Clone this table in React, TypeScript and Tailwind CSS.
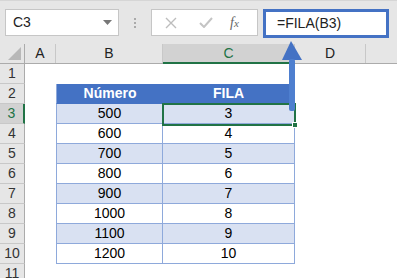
import React from "react";

const rows = [
  { n: 1 },
  { n: 2, b: "Número", c: "FILA", header: true },
  { n: 3, b: "500", c: "3", band: true },
  { n: 4, b: "600", c: "4" },
  { n: 5, b: "700", c: "5", band: true },
  { n: 6, b: "800", c: "6" },
  { n: 7, b: "900", c: "7", band: true },
  { n: 8, b: "1000", c: "8" },
  { n: 9, b: "1100", c: "9", band: true },
  { n: 10, b: "1200", c: "10" },
  { n: 11 },
];

const font = { fontFamily: '"Liberation Sans", Arial, sans-serif' };

export default function App() {
  return (
    <div className="relative w-[397px] h-[278px] overflow-hidden bg-white text-[#222]" style={font}>
      {/* top bar */}
      <div className="h-[44px] bg-[#e6e6e6] border-t border-[#d6d6d6] flex items-start pt-[8px]">
        <div className="ml-[5px] w-[114px] h-[27px] bg-white border border-[#c6c6c6] flex items-center justify-between pl-[7px] pr-[6px]">
          <span className="text-[14px] text-[#222]">C3</span>
          <svg width="9" height="5" viewBox="0 0 9 5"><path d="M0 0h9L4.5 5z" fill="#777" /></svg>
        </div>
        <div className="w-[32px] h-[27px] flex flex-col items-center justify-center gap-[2px]">
          <span className="w-[2px] h-[2px] bg-[#aaa]" />
          <span className="w-[2px] h-[2px] bg-[#aaa]" />
          <span className="w-[2px] h-[2px] bg-[#aaa]" />
        </div>
        <div className="w-[107px] h-[27px] bg-white border border-[#c6c6c6] flex items-center">
          <svg className="ml-[13px]" width="12" height="12" viewBox="0 0 12 12"><path d="M1 1l10 10M11 1L1 11" stroke="#bdbdbd" strokeWidth="1.4" /></svg>
          <svg className="ml-[22px]" width="14" height="11" viewBox="0 0 14 11"><path d="M1 6l4 4 8-9" stroke="#c4c4c4" strokeWidth="2" fill="none" /></svg>
          <span className="ml-[17px] text-[14px] italic text-[#666]" style={{ fontFamily: '"Liberation Serif", serif' }}>f<span className="text-[11px]">x</span></span>
        </div>
        <div className="ml-[5px] w-[126px] h-[29px] bg-white border-[3px] border-[#4472c4] flex items-center pl-[11px]">
          <span className="text-[14px] text-[#222]">=FILA(B3)</span>
        </div>
      </div>

      {/* column headers */}
      <div className="flex h-[20px] bg-[#e6e6e6] border-b border-[#ababab] text-[14px] text-[#222]">
        <div className="w-[25px] h-full border-r border-[#ababab] relative">
          <svg className="absolute right-[3px] bottom-[3px]" width="13" height="13" viewBox="0 0 13 13"><path d="M13 0v13H0z" fill="#b8b8b8" /></svg>
        </div>
        <div className="w-[31px] h-full border-r border-[#c8c8c8] flex items-center justify-center">A</div>
        <div className="w-[107px] h-full border-r border-[#c8c8c8] flex items-center justify-center">B</div>
        <div className="w-[132px] h-[20px] bg-[#d2d2d2] border-b-2 border-[#217346] border-r border-r-[#c8c8c8] flex items-center justify-center text-[#217346] -mb-px">C</div>
        <div className="w-[71px] h-full border-r border-[#c8c8c8] flex items-center justify-center">D</div>
        <div className="flex-1 h-full" />
      </div>

      {/* rows */}
      {rows.map((r) => {
        const selRow = r.n === 3;
        const inTable = r.b !== undefined;
        const fill = r.header ? "bg-[#4472c4]" : r.band ? "bg-[#d9e1f2]" : "bg-white";
        return (
          <div key={r.n} className="flex h-[20px] text-[14px]">
            <div
              className={
                "w-[25px] h-full border-b flex items-center justify-center " +
                (selRow
                  ? "bg-[#d2d2d2] border-b-[#c8c8c8] border-r-2 border-r-[#217346] text-[#217346]"
                  : "bg-[#e6e6e6] border-b-[#c8c8c8] border-r border-r-[#ababab] text-[#333]")
              }
            >
              {r.n}
            </div>
            <div className="w-[31px] h-full" />
            {inTable ? (
              <>
                <div
                  className={
                    "w-[107px] h-full flex items-center justify-center border-l border-[#8ea9db] " +
                    (r.header ? "" : "border-r ") +
                    "border-b " +
                    fill +
                    (r.header ? " text-white font-bold border-[#4472c4] border-l-[#8ea9db]" : " text-black")
                  }
                >
                  {r.b}
                </div>
                <div
                  className={
                    "w-[132px] h-full flex items-center justify-center border-r border-b border-[#8ea9db] " +
                    fill +
                    (r.header ? " text-white font-bold border-b-[#4472c4]" : " text-black")
                  }
                >
                  {r.c}
                </div>
              </>
            ) : (
              <div className="w-[239px] h-full" />
            )}
            <div className="flex-1 h-full" />
          </div>
        );
      })}

      {/* selection C3 */}
      <div className="absolute left-[162px] top-[103px] w-[134px] h-[23px] border-2 border-[#217346]" />
      <div className="absolute left-[292px] top-[122px] w-[6px] h-[6px] bg-[#217346] border border-white" />

      {/* arrow */}
      <svg className="absolute left-[280px] top-[40px]" width="24" height="72" viewBox="0 0 24 72">
        <path d="M11 1L22 20H2z" fill="#4472c4" />
        <rect x="9" y="19" width="6" height="52" rx="2" fill="#4e7fcf" />
      </svg>
    </div>
  );
}
